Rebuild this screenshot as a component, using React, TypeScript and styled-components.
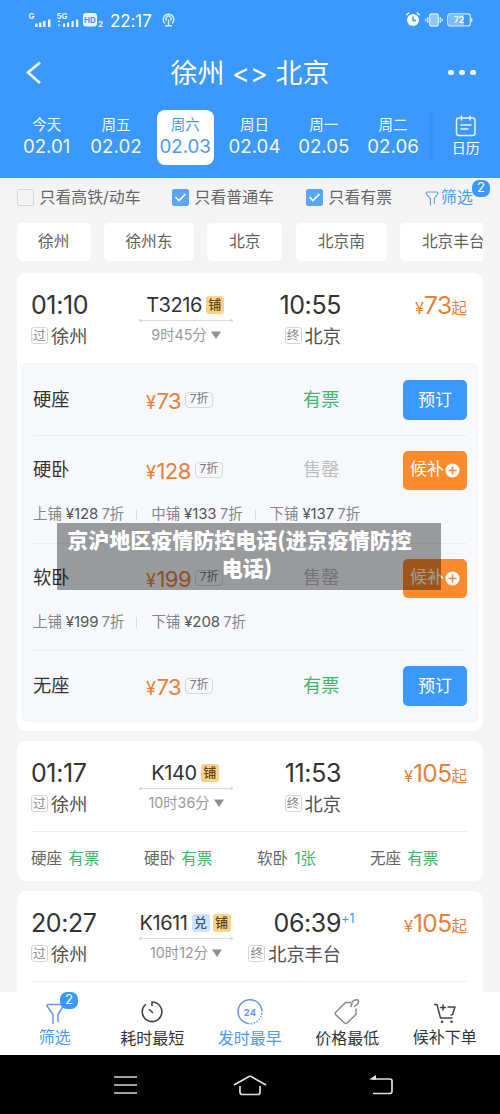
import React from 'react';
import styled, { createGlobalStyle } from 'styled-components';

const Global = createGlobalStyle`
  * { box-sizing: border-box; }
  body {
    margin: 0;
    background: #f4f4f4;
    font-family: Inter, "Noto Sans CJK SC", sans-serif;
    color: #333;
  }
`;

const Screen = styled.div`
  position: relative;
  width: 500px;
  height: 1114px;
  overflow: hidden;
  display: flex;
  flex-direction: column;
`;

/* ---------- header ---------- */
const Header = styled.header`
  flex: none;
  height: 178px;
  background: #3b98fc;
  color: #fff;
  display: flex;
  flex-direction: column;
`;
const StatusBar = styled.div`
  height: 39px;
  padding: 0 27px 0 29px;
  display: flex;
  align-items: center;
  justify-content: space-between;
`;
const StatusGroup = styled.div<{ $gap?: number }>`
  display: flex;
  align-items: center;
  gap: ${p => p.$gap ?? 0}px;
`;
const Clock = styled.span`
  font-size: 17px;
  line-height: 20px;
  width: 44px;
  margin: 2px 8px 0 6px;
  letter-spacing: -0.1px;
`;
const TitleRow = styled.div`
  height: 67px;
  padding: 0 24px;
  display: grid;
  grid-template-columns: 60px 1fr 60px;
  align-items: center;
`;
const Title = styled.h1`
  margin: 3px 0 0;
  font-size: 27px;
  font-weight: 400;
  line-height: 40px;
  text-align: center;
  white-space: nowrap;
`;
const More = styled.div`
  display: flex;
  justify-content: flex-end;
  gap: 5.4px;
`;
const Dot = styled.i`
  width: 5.6px;
  height: 5.6px;
  border-radius: 50%;
  background: #fff;
`;
const Dates = styled.div`
  display: flex;
  padding: 4px 0 0 12px;
`;
const DateTab = styled.div<{ $active?: boolean }>`
  width: 57px;
  height: 55px;
  margin: 0 6.15px;
  border-radius: 8px;
  text-align: center;
  padding-top: 4px;
  background: ${p => (p.$active ? '#fff' : 'transparent')};
  color: ${p => (p.$active ? '#4a9be6' : '#f0faff')};
`;
const Weekday = styled.div`
  font-size: 14.5px;
  line-height: 21px;
`;
const Day = styled.div`
  font-size: 18.7px;
  line-height: 24px;
`;
const Calendar = styled.div`
  flex: 1;
  height: 48px;
  margin-top: 3px;
  padding: 2px 0 0 4px;
  display: flex;
  flex-direction: column;
  align-items: center;
  font-size: 14px;
  line-height: 22px;
  background: linear-gradient(90deg, #3b98fc 0, #3691f5 3px, #3b98fc 8px);
`;

/* ---------- filters ---------- */
const Filters = styled.div`
  flex: none;
  height: 45px;
  padding: 0 0 5px 17px;
  display: flex;
  align-items: center;
  font-size: 15.9px;
  color: #666;
`;
const Check = styled.div<{ $w: number }>`
  width: ${p => p.$w}px;
  display: flex;
  align-items: center;
  gap: 5.5px;
  white-space: nowrap;
  line-height: 22px;
`;
const Box = styled.span<{ $on?: boolean }>`
  width: 17px;
  height: 17px;
  margin-top: -1px;
  border-radius: 2px;
  display: flex;
  align-items: center;
  justify-content: center;
  background: ${p => (p.$on ? '#59a5fa' : '#f5f5f5')};
  border: 1px solid ${p => (p.$on ? '#59a5fa' : '#d6d6d6')};
`;
const FilterLink = styled.div`
  position: relative;
  display: flex;
  align-items: center;
  gap: 2px;
  color: #4a9bf0;
  line-height: 22px;
`;
const Badge = styled.span<{ $x: number; $y: number }>`
  position: absolute;
  left: ${p => p.$x}px;
  top: ${p => p.$y}px;
  width: 18px;
  height: 17px;
  border-radius: 7px;
  background: #3b98fc;
  color: #fff;
  font-size: 13px;
  line-height: 15px;
  text-align: center;
`;
const Chips = styled.div`
  flex: none;
  height: 38px;
  margin: 0 17px 12px;
  display: flex;
  overflow: hidden;
  gap: 13.2px;
`;
const Chip = styled.div<{ $w: number }>`
  flex: none;
  width: ${p => p.$w}px;
  height: 38px;
  border-radius: 5px;
  background: #fff;
  text-align: center;
  font-size: 15.7px;
  line-height: 38px;
  color: #606060;
`;

/* ---------- train cards ---------- */
const List = styled.main`
  flex: 1;
  min-height: 0;
  overflow: hidden;
  padding: 0 17px;
  display: flex;
  flex-direction: column;
  gap: 10px;
`;
const Card = styled.section<{ $h: number }>`
  flex: none;
  height: ${p => p.$h}px;
  border-radius: 9px;
  background: #fff;
`;
const Summary = styled.div`
  height: 90px;
  padding: 17px 16px 0 14px;
  display: grid;
  grid-template-columns: 108px 94px 108px 1fr;
`;
const Stop = styled.div<{ $end?: boolean }>`
  display: flex;
  flex-direction: column;
  align-items: ${p => (p.$end ? 'flex-end' : 'flex-start')};
`;
const Time = styled.div`
  position: relative;
  font-size: 25px;
  line-height: 30px;
  letter-spacing: -0.4px;
  color: #333;
  white-space: nowrap;
`;
const PlusDay = styled.sup`
  position: absolute;
  left: 100%;
  top: 2px;
  font-size: 13px;
  line-height: 16px;
  letter-spacing: -0.3px;
  color: #4a9bf0;
`;
const Station = styled.div`
  display: flex;
  align-items: center;
  gap: 3px;
  margin-top: 2px;
  font-size: 18.2px;
  line-height: 28px;
  color: #505050;
  white-space: nowrap;
`;
const Mark = styled.span`
  width: 17px;
  height: 17px;
  margin-top: -2px;
  border: 1px solid #d5d5d5;
  border-radius: 3px;
  font-size: 12.5px;
  line-height: 15px;
  display: flex;
  justify-content: center;
  color: #888;
`;
const Train = styled.div`
  display: flex;
  flex-direction: column;
  align-items: center;
`;
const TrainNo = styled.div`
  height: 30px;
  display: flex;
  align-items: center;
  gap: 4px;
  margin: 0 -4px 0 -6px;
  font-size: 20px;
  line-height: 30px;
  letter-spacing: -0.45px;
  white-space: nowrap;
`;
const Tag = styled.span<{ $blue?: boolean }>`
  width: 18px;
  height: 18px;
  border-radius: 3px;
  font-size: 13px;
  font-weight: 500;
  line-height: 17px;
  text-align: center;
  letter-spacing: 0;
  background: ${p => (p.$blue ? '#cfe3ff' : '#f8d48a')};
  color: ${p => (p.$blue ? '#36557f' : '#5c4617')};
  & + & { margin-left: -1px; }
`;
const Route = styled.div`
  width: 94px;
  height: 3px;
  margin-top: -1px;
  display: flex;
  align-items: center;
  &::before, &::after {
    content: '';
    width: 3px;
    height: 3px;
    border-radius: 50%;
    background: #d8d8d8;
  }
`;
const RouteLine = styled.span`
  flex: 1;
  height: 1px;
  background: #dcdcdc;
`;
const Duration = styled.div`
  display: flex;
  align-items: center;
  gap: 4px;
  height: 25px;
  font-size: 14.3px;
  line-height: 25px;
  color: #999;
  white-space: nowrap;
`;
const Fare = styled.div`
  text-align: right;
  color: #e5813a;
  line-height: 30px;
  font-size: 24.5px;
  letter-spacing: -0.6px;
  white-space: nowrap;
`;
const Small = styled.span<{ $s: number }>`
  font-size: ${p => p.$s}px;
  letter-spacing: 0;
`;

const Panel = styled.div`
  margin: 0 5px;
  height: 359px;
  border-radius: 6px;
  background: #f6f8fc;
  border: 1px solid #f2f4f8;
  padding: 0 10px;
`;
const Seat = styled.div<{ $h: number }>`
  height: ${p => p.$h}px;
  padding-top: 16px;
  & + & { border-top: 1px solid #ebedf0; padding-top: 15px; }
`;
const SeatMain = styled.div<{ $shift: number }>`
  height: 40px;
  display: grid;
  grid-template-columns: 113px 157px 1fr 64px;
  grid-template-rows: 40px;
  align-items: center;
  font-size: 18.2px;
  line-height: 26px;
  & > div { padding-bottom: ${p => p.$shift}px; }
`;
const SeatName = styled.div`
  color: #333;
`;
const SeatPrice = styled.div`
  display: flex;
  align-items: baseline;
  margin-top: 6px;
  color: #e5813a;
  font-size: 22px;
  letter-spacing: -0.5px;
`;
const Yen = styled.span`
  font-size: 18px;
  letter-spacing: 0;
  margin-right: 0.5px;
`;
const Discount = styled.span`
  align-self: center;
  margin: -3px 0 0 4px;
  width: 28px;
  height: 16px;
  border: 1px solid #d4d7db;
  border-radius: 4px;
  color: #777;
  font-size: 12px;
  line-height: 12px;
  letter-spacing: 0;
  text-align: center;
`;
const State = styled.div<{ $out?: boolean }>`
  color: ${p => (p.$out ? '#bdbdbd' : '#44b36c')};
`;
const Button = styled.button<{ $wait?: boolean }>`
  width: 64px;
  height: ${p => (p.$wait ? 39 : 40)}px;
  align-self: start;
  padding: 0 0 ${p => (p.$wait ? 3 : 1)}px;
  border: 0;
  border-radius: 5px;
  background: ${p => (p.$wait ? '#ff8a2b' : '#3b98fc')};
  color: #fff;
  font: inherit;
  font-size: 17px;
  display: flex;
  align-items: center;
  justify-content: center;
  gap: 1px;
  svg { margin-top: 3px; }
`;
const Berths = styled.div`
  display: flex;
  align-items: center;
  margin-top: 13px;
  font-size: 14.4px;
  line-height: 20px;
  color: #858585;
  white-space: nowrap;
`;
const Berth = styled.span`
  & + & {
    margin-left: 12px;
    padding-left: 15px;
    background: linear-gradient(#dcdcdc, #dcdcdc) 0 50% / 1px 11px no-repeat;
  }
`;
const BerthPrice = styled.b`
  font-weight: 400;
  font-size: 15px;
  letter-spacing: -0.1px;
  color: #555;
  margin: 0 3.5px 0 4px;
`;
const Brief = styled.div`
  margin: 0 16px 0 14px;
  border-top: 1px solid #eee;
  padding-top: 16px;
  display: grid;
  grid-template-columns: 113px 113px 113px 1fr;
  font-size: 15.6px;
  line-height: 22px;
  color: #666;
  white-space: nowrap;
`;
const Green = styled.span`
  margin-left: 6px;
  color: #44b36c;
`;

/* ---------- bottom ---------- */
const Tabs = styled.nav`
  flex: none;
  height: 63px;
  background: #fff;
  padding: 0 6px;
  display: grid;
  grid-template-columns: repeat(5, 97.5px);
`;
const Tab = styled.div<{ $on?: boolean; $up?: boolean }>`
  position: relative;
  display: flex;
  flex-direction: column;
  align-items: center;
  padding-top: 5px;
  font-size: 16px;
  line-height: 22px;
  color: ${p => (p.$on ? '#4a9bf0' : '#333')};
  white-space: nowrap;
  svg { margin-bottom: ${p => (p.$up ? -1 : 0)}px; }
`;
const NavBar = styled.div`
  flex: none;
  height: 59px;
  background: #000;
  display: grid;
  grid-template-columns: 125px 125px 137px;
  justify-content: center;
  justify-items: center;
  align-items: center;
  padding-left: 12px;
`;
const Caption = styled.div`
  position: absolute;
  left: 57px;
  top: 523px;
  width: 384px;
  height: 67px;
  padding: 2px 0 0;
  background: rgba(0, 0, 0, 0.38);
  color: #fff;
  font-family: "Noto Sans CJK SC", sans-serif;
  font-weight: 900;
  font-size: 21px;
  line-height: 28px;
  text-align: center;
  white-space: nowrap;
`;
const CaptionLine = styled.div<{ $shift: number }>`
  padding-right: ${p => p.$shift}px;
`;

const Funnel = ({ w, h }: { w: number; h: number }) => (
  <svg width={w} height={h} viewBox="0 0 18 22" preserveAspectRatio="none" fill="none" stroke="#6b96e8" strokeWidth="1.5" strokeLinecap="round" strokeLinejoin="round">
    <path d="M7 20.500V11.500L1.500 4Q1 1.500 3 1.500H15Q17 1.500 16.500 4L12 11V18" />
  </svg>
);
const Tick = () => (
  <svg width="13" height="11" viewBox="0 0 13 11" fill="none" stroke="#fff" strokeWidth="1.6">
    <path d="M1.500 5L5 8.500L11.500 2" />
  </svg>
);
const Signals = () => (
  <svg width="75" height="18" viewBox="0 0 75 18" fill="#e6f5ff" fontFamily="Inter, sans-serif" fontWeight="700">
    <text x="-0.500" y="8" fontSize="8">G</text>
    <path d="M6 12.500h2.500V16H6zM10 11.500h2.500V16H10zM14 10h2.500v6H14zM19 8.500h2.500V16H19z" />
    <text x="27.500" y="8" fontSize="8">5G</text>
    <path d="M28.500 11l1.500-2 1.500 2zM28.500 13.500h3l-1.500 2zM34 12.500h2.200V16H34zM38 11.500h2.200V16H38zM42.500 10h2.200v6h-2.200zM47 8.500h2.200V16H47z" />
    <rect x="54" y="2" width="14" height="13.500" rx="3" />
    <text x="55" y="12" fontSize="8" fill="#3b98fc">HD</text>
    <text x="69" y="16" fontSize="8">2</text>
  </svg>
);
const Radio = () => (
  <svg width="13" height="15" viewBox="0 0 13 15" fill="none" stroke="#d9f1ff" strokeWidth="1.400">
    <path d="M3 11.500A5.300 5.300 0 1 1 10 11.500M4.500 8.500a2.600 2.600 0 1 1 4 0M6.500 7.500V13M3 13.800h7" />
  </svg>
);
const Alarm = () => (
  <svg width="14" height="15" viewBox="0 0 14 15" fill="none" strokeWidth="1.400" strokeLinecap="round">
    <circle cx="7" cy="8" r="6" fill="#f3fbff" />
    <path d="M.800 2.800L2.800 1M11.200 1l2 1.800" stroke="#f3fbff" />
    <path d="M7 5v3.500h2.500" stroke="#3b98fc" />
  </svg>
);
const Vibrate = () => (
  <svg width="18" height="14" viewBox="0 0 18 14" fill="none" stroke="#c9ecff" strokeWidth="1.300">
    <rect x="4.700" y="1" width="8.600" height="12" rx="1.500" fill="#8fc6fb" />
    <path d="M2.800 4v6M.800 5.500v3M15.200 4v6M17.200 5.500v3" />
  </svg>
);
const Battery = () => (
  <svg width="26" height="14" viewBox="0 0 26 14" fill="none" stroke="#c9ecff" strokeWidth="1.300">
    <rect x="2" y="2" width="15" height="10" fill="#7dbafa" stroke="none" />
    <rect x=".700" y=".900" width="22.600" height="12" rx="2.500" />
    <path d="M24.700 5v4" />
    <text x="12" y="10" fontSize="8.500" fontWeight="600" fontFamily="Inter, sans-serif" textAnchor="middle" fill="#fff" stroke="none">72</text>
  </svg>
);
const PlusCircle = () => (
  <svg width="15" height="15" viewBox="0 0 15 15">
    <circle cx="7.500" cy="7.500" r="7" fill="#fff" />
    <path d="M3.500 7.500h8M7.500 3.500v8" stroke="#f0883c" strokeWidth="1.600" />
  </svg>
);
const Caret = () => (
  <svg width="10" height="8" viewBox="0 0 10 8"><path d="M0 .500h10L5 8z" fill="#8f8f8f" /></svg>
);

type SummaryProps = {
  from: string; to: string; no: string; dur: string; end: string; price: string;
  swap?: boolean; plus?: boolean;
};
const TrainSummary = ({ from, to, no, dur, end, price, swap, plus }: SummaryProps) => (
  <Summary>
    <Stop>
      <Time>{from}</Time>
      <Station><Mark>过</Mark>徐州</Station>
    </Stop>
    <Train>
      <TrainNo>{no}{swap && <Tag $blue>兑</Tag>}<Tag>铺</Tag></TrainNo>
      <Route><RouteLine /></Route>
      <Duration>{dur}<Caret /></Duration>
    </Train>
    <Stop $end>
      <Time>{to}{plus && <PlusDay>+1</PlusDay>}</Time>
      <Station><Mark>终</Mark>{end}</Station>
    </Stop>
    <Fare><Small $s={16.5}>¥</Small>{price}<Small $s={15.5}>起</Small></Fare>
  </Summary>
);

type SeatProps = { name: string; price: string; out?: boolean; h: number; berths?: [string, string][] };
const SeatRow = ({ name, price, out, h, berths }: SeatProps) => (
  <Seat $h={h}>
    <SeatMain $shift={out ? 5 : 3}>
      <SeatName>{name}</SeatName>
      <SeatPrice><Yen>¥</Yen>{price}<Discount>7折</Discount></SeatPrice>
      <State $out={out}>{out ? '售罄' : '有票'}</State>
      <Button $wait={out}>{out ? <>候补<PlusCircle /></> : '预订'}</Button>
    </SeatMain>
    {berths && (
      <Berths>
        {berths.map(([n, p]) => <Berth key={n}>{n}<BerthPrice>¥{p}</BerthPrice>7折</Berth>)}
      </Berths>
    )}
  </Seat>
);

const days = [['今天', '02.01'], ['周五', '02.02'], ['周六', '02.03'], ['周日', '02.04'], ['周一', '02.05'], ['周二', '02.06']];

export default function App() {
  return (
    <Screen>
      <Global />
      <Header>
        <StatusBar>
          <StatusGroup><Signals /><Clock>22:17</Clock><Radio /></StatusGroup>
          <StatusGroup $gap={4.5}><Alarm /><Vibrate /><Battery /></StatusGroup>
        </StatusBar>
        <TitleRow>
          <svg width="18" height="24" viewBox="0 0 18 24" fill="none" stroke="#fff" strokeWidth="2.600">
            <path d="M16 1.500L4 11.500L16 22" />
          </svg>
          <Title>徐州 &lt;&gt; 北京</Title>
          <More><Dot /><Dot /><Dot /></More>
        </TitleRow>
        <Dates>
          {days.map(([w, d]) => (
            <DateTab key={d} $active={d === '02.03'}><Weekday>{w}</Weekday><Day>{d}</Day></DateTab>
          ))}
          <Calendar>
            <svg width="22" height="22" viewBox="0 0 22 22" fill="none" stroke="#e6f7ff" strokeWidth="1.500" strokeLinecap="round">
              <rect x="1.500" y="3" width="18.500" height="17.500" rx="2.500" />
              <path d="M6.500 1v4M15 1v4M6 10h10M6 14h7" />
            </svg>
            日历
          </Calendar>
        </Dates>
      </Header>

      <Filters>
        <Check $w={155}><Box />只看高铁/动车</Check>
        <Check $w={134}><Box $on><Tick /></Box>只看普通车</Check>
        <Check $w={119}><Box $on><Tick /></Box>只看有票</Check>
        <FilterLink><Funnel w={14} h={15} />筛选<Badge $x={47} $y={-7}>2</Badge></FilterLink>
      </Filters>
      <Chips>
        <Chip $w={73.500}>徐州</Chip>
        <Chip $w={90.500}>徐州东</Chip>
        <Chip $w={75}>北京</Chip>
        <Chip $w={91.500}>北京南</Chip>
        <Chip $w={106}>北京丰台</Chip>
      </Chips>

      <List>
        <Card $h={458}>
          <TrainSummary from="01:10" to="10:55" no="T3216" dur="9时45分" end="北京" price="73" />
          <Panel>
            <SeatRow name="硬座" price="73" h={71} />
            <SeatRow name="硬卧" price="128" out h={108} berths={[['上铺', '128'], ['中铺', '133'], ['下铺', '137']]} />
            <SeatRow name="软卧" price="199" out h={107} berths={[['上铺', '199'], ['下铺', '208']]} />
            <SeatRow name="无座" price="73" h={71} />
          </Panel>
        </Card>
        <Card $h={140}>
          <TrainSummary from="01:17" to="11:53" no="K140" dur="10时36分" end="北京" price="105" />
          <Brief>
            <span>硬座<Green>有票</Green></span>
            <span>硬卧<Green>有票</Green></span>
            <span>软卧<Green>1张</Green></span>
            <span>无座<Green>有票</Green></span>
          </Brief>
        </Card>
        <Card $h={140}>
          <TrainSummary from="20:27" to="06:39" no="K1611" dur="10时12分" end="北京丰台" price="105" swap plus />
          <Brief />
        </Card>
      </List>

      <Tabs>
        <Tab $on $up>
          <svg width="30" height="30" viewBox="0 0 30 30" fill="none" stroke="#6b96e8" strokeWidth="1.500" strokeLinecap="round" strokeLinejoin="round">
            <path d="M13 26.500V17.500L7.300 9.500Q6.500 7.500 8.500 7.500H22Q23.500 7.500 23 9.500L18 17.500V24.500" />
          </svg>
          筛选<Badge $x={54} $y={0}>2</Badge>
        </Tab>
        <Tab>
          <svg width="30" height="30" viewBox="0 0 30 30" fill="none" stroke="#444" strokeWidth="1.600" strokeLinecap="round">
            <path d="M15 8.500V5A9.800 9.800 0 1 1 8.500 7.500M12.500 12.500L15.500 15.500" />
          </svg>
          耗时最短
        </Tab>
        <Tab $on>
          <svg width="30" height="30" viewBox="0 0 30 30" fill="none" stroke="#6b96e8" strokeWidth="1.500">
            <path d="M13 26.500A12 12 0 1 1 26.900 13" />
            <path d="M26.900 13A12 12 0 0 1 13 26.500" strokeDasharray="1.500 1.500" />
            <text x="15" y="18.500" fontSize="9.500" fontWeight="700" fontFamily="Inter, sans-serif" textAnchor="middle" fill="#6b96e8" stroke="none">24</text>
          </svg>
          发时最早
        </Tab>
        <Tab>
          <svg width="30" height="30" viewBox="0 0 30 30" fill="none" stroke="#888" strokeWidth="1.500" strokeLinecap="round" strokeLinejoin="round">
            <path d="M18.500 5.500H13.500L3.500 15.500Q3 16.500 3.500 17.500L12.500 26Q14 27 15 26L24 17.500V12" />
            <path d="M19 9.500L20.500 4.500Q23 2 26 3Q27.500 4.500 25.500 7L22.500 9.500" />
          </svg>
          价格最低
        </Tab>
        <Tab $up>
          <svg width="30" height="30" viewBox="0 0 30 30" fill="none" stroke="#444" strokeWidth="1.500" strokeLinecap="round" strokeLinejoin="round">
            <path d="M4.500 7.500H7L10.500 21H22M18 10H25L22.500 17.500Q22 18 21 18M10.500 10.500h5M13 8v5" />
            <path d="M12 24.800h.100M21.500 24.800h.100" strokeWidth="2.600" />
          </svg>
          候补下单
        </Tab>
      </Tabs>
      <NavBar>
        <svg width="25" height="20" viewBox="0 0 25 20" stroke="#d8d8d8" strokeWidth="1.700"><path d="M1 2h23M1 10h23M1 18h23" /></svg>
        <svg width="34" height="22" viewBox="0 0 34 22" fill="none" stroke="#e0e0e0" strokeWidth="1.700">
          <path d="M1 11L16 2.500Q17 2 18 2.500L33 11M7 12V18Q7 20.500 9.500 20.500H25Q27 20.500 27 18V12" />
        </svg>
        <svg width="26" height="20" viewBox="0 0 26 20" fill="none" stroke="#e0e0e0" strokeWidth="1.700">
          <path d="M4 4H22Q24 4 24 6V16Q24 18.500 21.500 18.500H5" />
          <path d="M1 4.500L8 0V4.500Z" fill="#e0e0e0" stroke="none" />
        </svg>
      </NavBar>

      <Caption>
        <CaptionLine $shift={19}>京沪地区疫情防控电话(进京疫情防控</CaptionLine>
        <CaptionLine $shift={4}>电话)</CaptionLine>
      </Caption>
    </Screen>
  );
}
